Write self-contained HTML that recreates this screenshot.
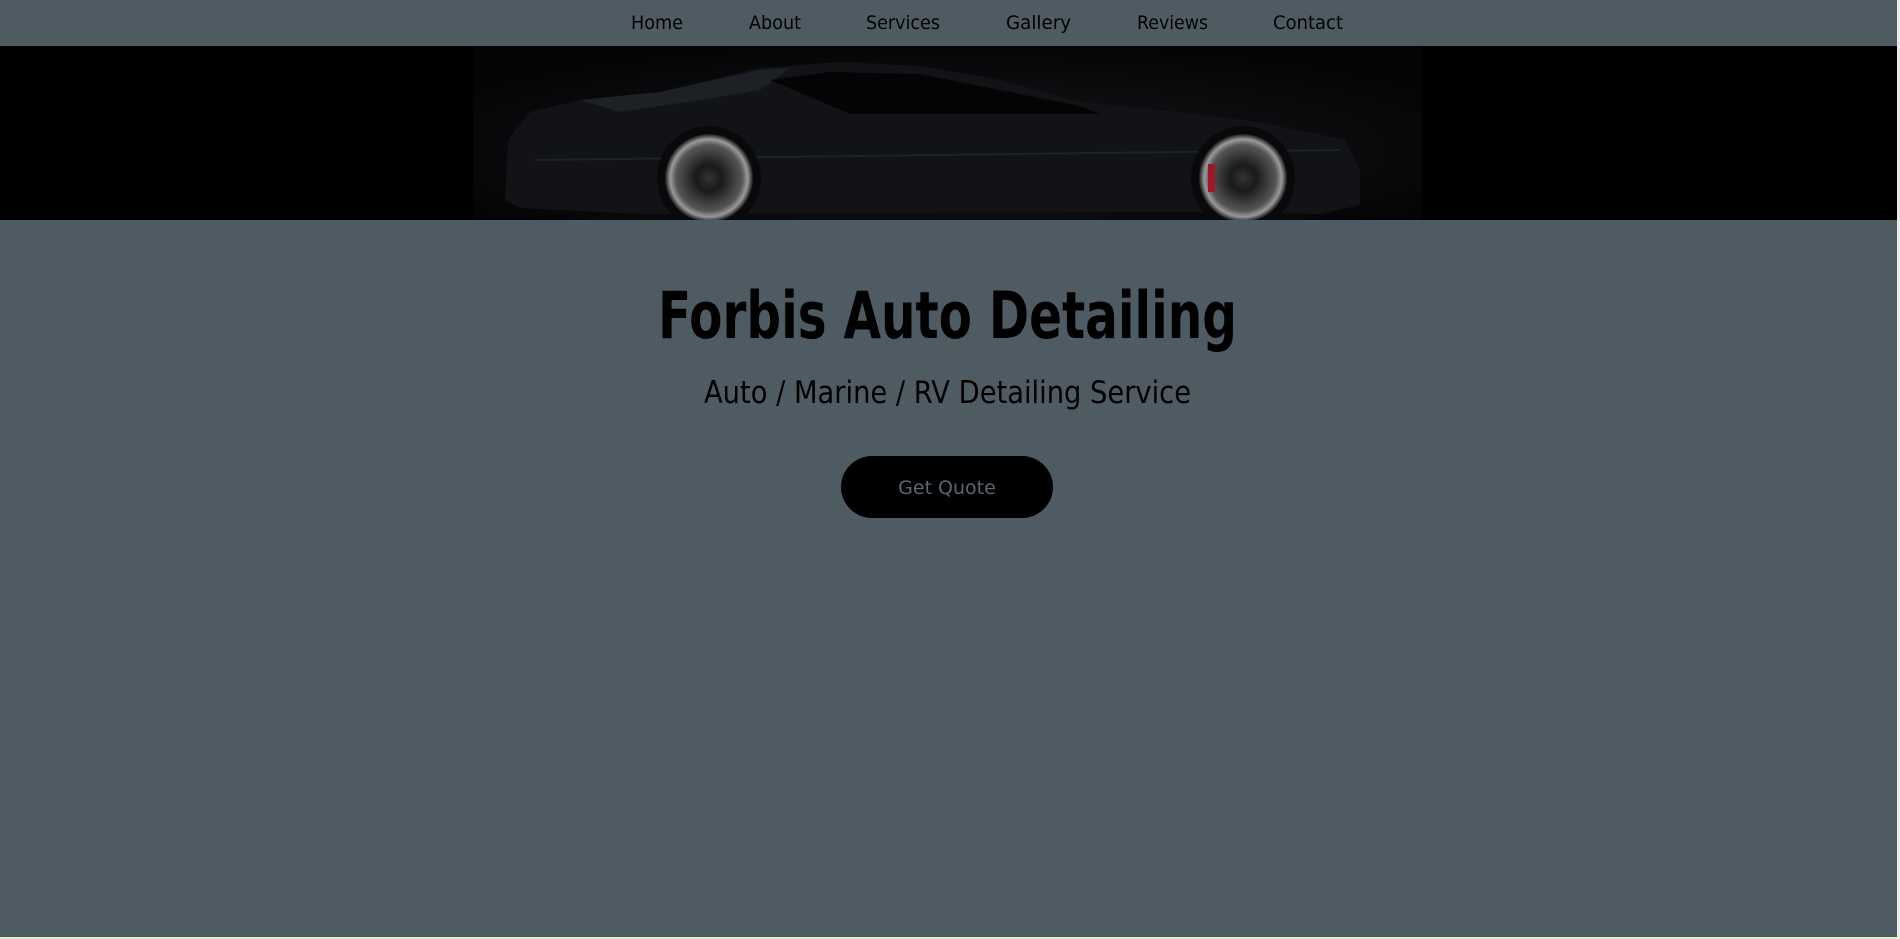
<!DOCTYPE html>
<html><head><meta charset="utf-8"><style>
html,body{margin:0;padding:0;width:1900px;height:939px;overflow:hidden;background:#4f5b63;}
svg{display:block}
</style></head><body>
<svg width="1900" height="939" xmlns="http://www.w3.org/2000/svg" font-family="DejaVu Sans, Liberation Sans, sans-serif">
<defs>
<radialGradient id="g1" cx="0.5" cy="0.6" r="0.6"><stop offset="0" stop-color="#15171a"/><stop offset="1" stop-color="#050506"/></radialGradient>
<radialGradient id="wh" cx="0.5" cy="0.5" r="0.5"><stop offset="0" stop-color="#333"/><stop offset="0.3" stop-color="#1a1a1a"/><stop offset="0.75" stop-color="#555"/><stop offset="0.88" stop-color="#9a9a9a"/><stop offset="1" stop-color="#1a1a1a"/></radialGradient>
<clipPath id="cp"><rect x="473" y="46" width="949" height="174"/></clipPath>
</defs>
<rect width="1900" height="939" fill="#4f5b63"/>
<rect x="1897" y="0" width="3" height="939" fill="#e8ece8"/>
<rect x="0" y="937" width="1900" height="2" fill="#e4f0d4"/>
<g font-size="19" fill="#000">
<text x="631" y="29" textLength="52" lengthAdjust="spacingAndGlyphs">Home</text>
<text x="749" y="29" textLength="52" lengthAdjust="spacingAndGlyphs">About</text>
<text x="866" y="29" textLength="74" lengthAdjust="spacingAndGlyphs">Services</text>
<text x="1006" y="29" textLength="65" lengthAdjust="spacingAndGlyphs">Gallery</text>
<text x="1137" y="29" textLength="71" lengthAdjust="spacingAndGlyphs">Reviews</text>
<text x="1273" y="29" textLength="70" lengthAdjust="spacingAndGlyphs">Contact</text>
</g>
<rect x="0" y="46" width="1897" height="174" fill="#000"/>
<g clip-path="url(#cp)">
<rect x="473" y="46" width="949" height="174" fill="url(#g1)"/>
<path d="M505 200 L508 140 L530 112 L580 100 L660 92 L760 68 L840 62 L920 66 L1000 80 L1080 102 L1160 110 L1260 122 L1345 140 L1360 170 L1360 205 L1320 214 L1150 212 L640 214 L520 208 Z" fill="#111317"/>
<path d="M580 100 L660 92 L760 70 L790 68 L760 90 L700 100 L620 112 Z" fill="#1d2025"/>
<path d="M770 80 L830 72 L920 74 L1080 106 L1100 114 L850 114 Z" fill="#040405"/>
<path d="M535 160 L1340 150" stroke="#1e2126" stroke-width="2"/>
<circle cx="709" cy="178" r="52" fill="#08090a"/>
<circle cx="709" cy="178" r="44" fill="url(#wh)"/>
<circle cx="1243" cy="178" r="52" fill="#08090a"/>
<circle cx="1243" cy="178" r="44" fill="url(#wh)"/>
<rect x="1208" y="164" width="7" height="28" fill="#a01828"/>
</g>
<text x="658" y="338" font-size="65" font-weight="bold" fill="#000" textLength="579" lengthAdjust="spacingAndGlyphs">Forbis Auto Detailing</text>
<text x="704" y="403" font-size="31" fill="#000" textLength="487" lengthAdjust="spacingAndGlyphs">Auto / Marine / RV Detailing Service</text>
<rect x="841" y="456" width="212" height="62" rx="31" fill="#000"/>
<text x="947" y="494" font-size="19" fill="#5a6670" text-anchor="middle">Get Quote</text>
</svg>
</body></html>
